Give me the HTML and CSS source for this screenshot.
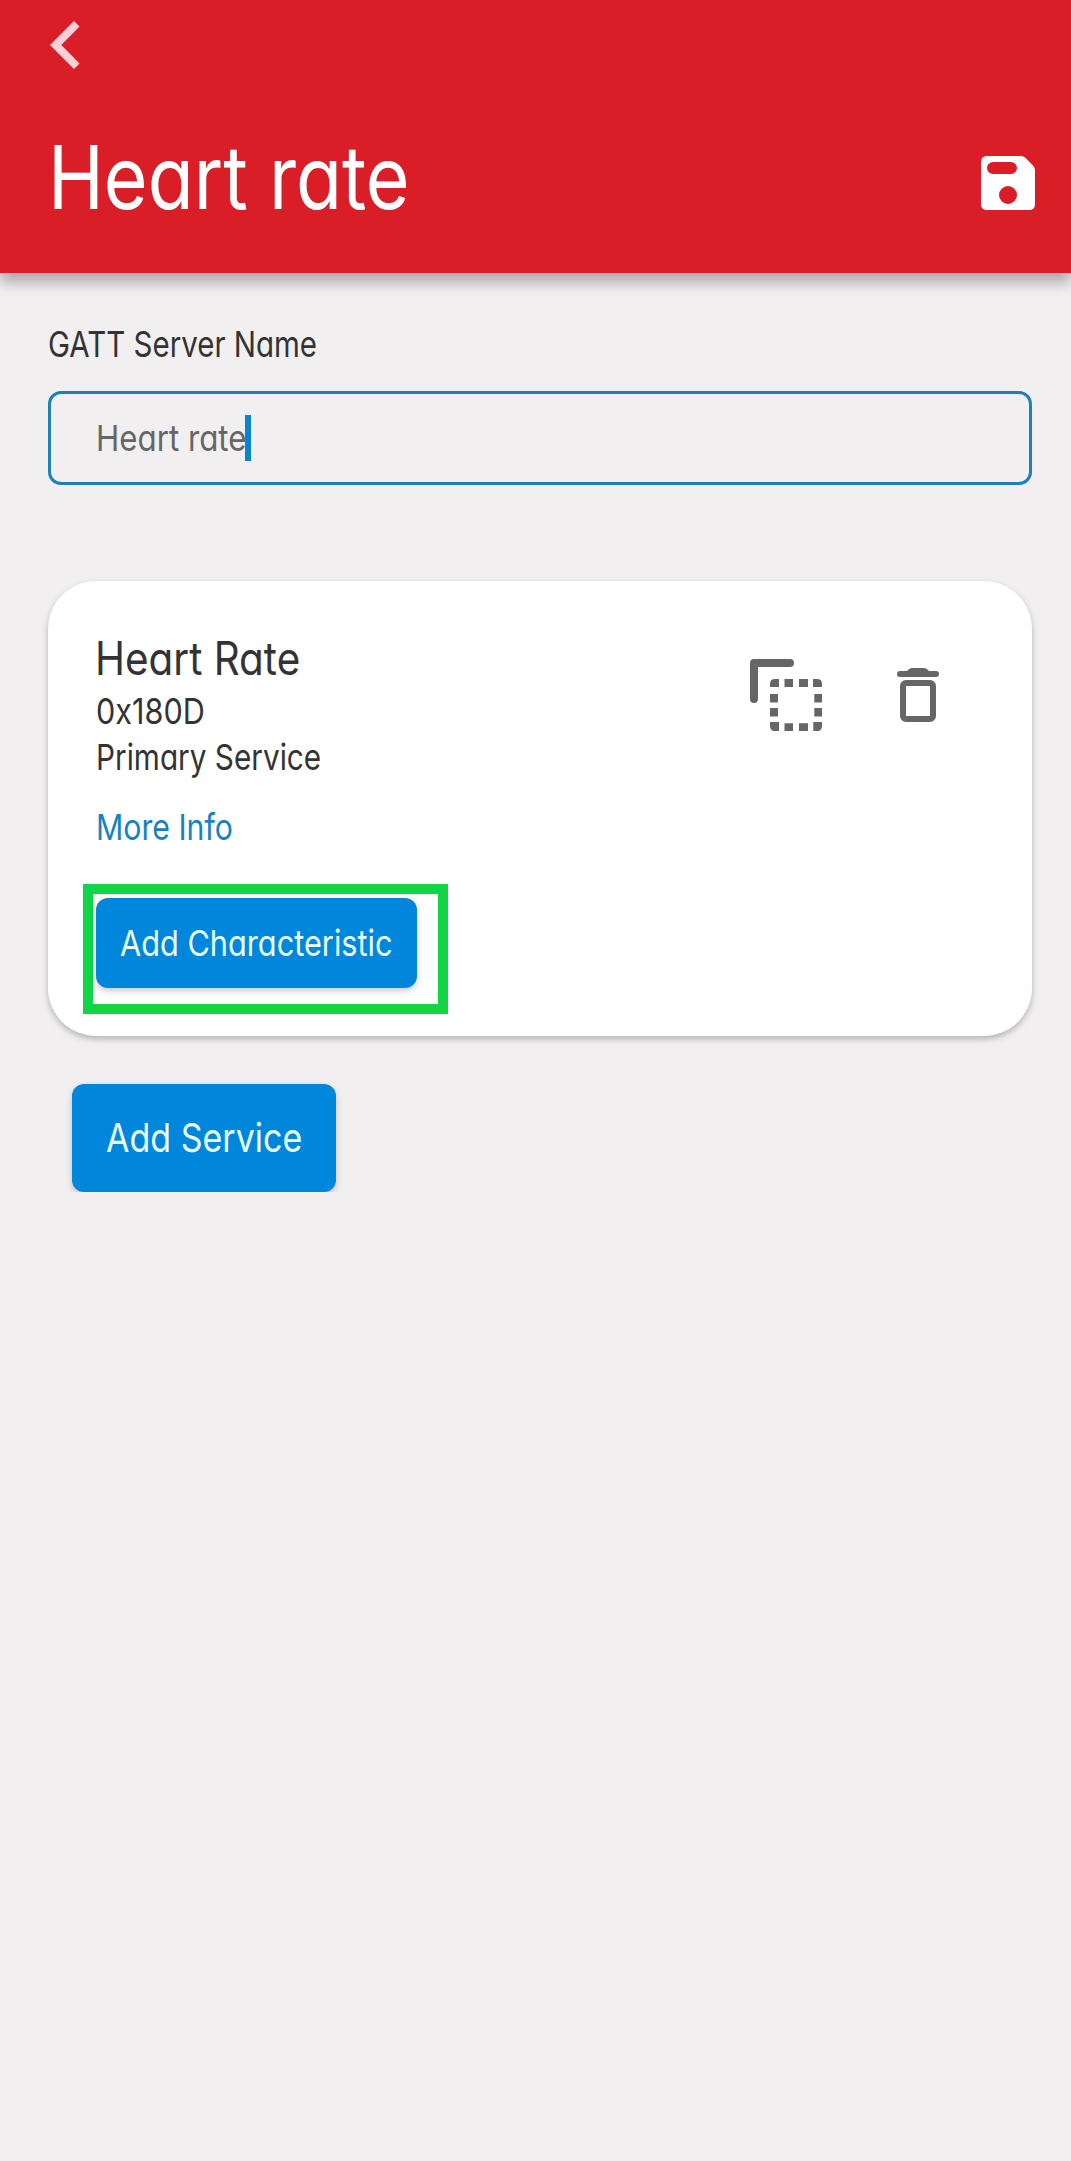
FILE: index.html
```html
<!DOCTYPE html>
<html lang="en">
<head>
<meta charset="utf-8">
<title>Heart rate</title>
<link rel="stylesheet" href="styles.css">
</head>
<body>
<header class="app-bar">
  <svg class="back" width="30" height="48" viewBox="0 0 30 48"><path d="M0 24 24 0l5.500 5.500L11.300 24l18.200 18.500L24 48z"/></svg>
  <div class="title-row">
    <h1 class="title"><span class="text t-title">Heart rate</span></h1>
    <svg class="save" width="54" height="54" viewBox="0 0 54 54"><path fill-rule="evenodd" d="M6 0h34q2.500 0 4.300 1.800l7.900 7.900q1.800 1.800 1.800 4.300v34q0 6-6 6H6q-6 0-6-6V6Q0 0 6 0zM12 6a6 6 0 0 0 0 12h18a6 6 0 0 0 0-12zM27 30a9 9 0 1 0 0 18a9 9 0 1 0 0-18z"/></svg>
  </div>
</header>
<main class="content">
  <div class="label"><span class="text t-label">GATT Server Name</span></div>
  <div class="field"><span class="text t-field">Heart rate</span><i class="caret"></i></div>
  <section class="card">
    <div class="card-head">
      <div class="info">
        <h2 class="name"><span class="text t-name">Heart Rate</span></h2>
        <p class="line"><span class="text t-uuid">0x180D</span></p>
        <p class="line"><span class="text t-kind">Primary Service</span></p>
        <a class="more"><span class="text t-more">More Info</span></a>
      </div>
      <div class="actions">
        <svg width="72" height="72" viewBox="0 0 72 72">
          <path d="M4 40V4h36" fill="none" stroke="#666" stroke-width="8" stroke-linecap="round" stroke-linejoin="round"/>
          <path fill="#666" d="M29 20v8h-9v-3q0-5 5-5zM34.500 20h8.500v8h-8.500zM49 20h9v8h-9zM63 20h4q5 0 5 5v3h-9zM20 35h8v8.500h-8zM64.300 35H72v8.500h-7.700zM20 49h8v8.500h-8zM64.300 49H72v8.500h-7.700zM20 63h9v9h-4q-5 0-5-5zM34.500 64.300h8.500V72h-8.500zM49 64.300h9V72h-9zM63.300 63H72v4q0 5-5 5h-3.700z"/>
        </svg>
        <svg class="trash" width="42" height="54" viewBox="0 0 42 54">
          <path fill="#666" d="M3 3h7l1.500-1.500Q13 0 15 0h12q2 0 3.500 1.500L32 3h7a3 3 0 0 1 0 6H3a3 3 0 0 1 0-6z"/>
          <rect x="6" y="15" width="30" height="36" rx="3" fill="none" stroke="#666" stroke-width="6"/>
        </svg>
      </div>
    </div>
    <div class="highlight"><button class="btn btn-char"><span class="text t-char">Add Characteristic</span></button></div>
  </section>
  <button class="btn btn-service"><span class="text t-service">Add Service</span></button>
</main>
</body>
</html>
```
FILE: styles.css
```css
* { box-sizing: border-box; margin: 0; padding: 0; }
body {
  background: #f1eff0;
  color: #333;
  font: 400 36px/46px Inter, "Liberation Sans", sans-serif;
  font-feature-settings: "cv11" 1;
}
svg { display: block; }
.app-bar {
  position: relative;
  height: 273px;
  padding: 21px 36px 0 50px;
  background: #da1e28;
  color: #fff;
  box-shadow: 0 9px 14px rgba(0, 0, 0, .3);
}
.back { fill: #fbd0d6; }
.title-row { display: flex; justify-content: space-between; margin-top: 57px; }
.title { margin: 1px 0 0 -2px; font-size: 87.500px; line-height: 100px; font-weight: 400; }
.save { fill: #fff; margin-top: 30px; }
.text { display: inline-block; transform-origin: 0 50%; white-space: nowrap; }
.t-title { transform: scaleX(.859); }
.t-label { transform: scaleX(.819); }
.t-field { transform: scaleX(.869); }
.t-name { transform: scaleX(.878); }
.t-uuid { transform: scaleX(.85); }
.t-kind { transform: scaleX(.826); }
.t-more { transform: scaleX(.84); }
.t-char { transform: scaleX(.853); }
.t-service { transform: scaleX(.85); }
.content { padding: 48px 39px 0 48px; }
.label { height: 46px; }
.field {
  display: flex;
  align-items: center;
  height: 94px;
  margin-top: 24px;
  padding-left: 45px;
  border: 3px solid #1c81bb;
  border-radius: 13px;
}
.t-field { color: #666; width: 149px; }
.caret { width: 6px; height: 46px; background: #0784cf; }
.card {
  height: 455px;
  margin-top: 96px;
  padding: 47px 48px 0;
  background: #fff;
  border-radius: 48px;
  box-shadow: 0 3px 6px rgba(0, 0, 0, .25);
}
.card-head { display: flex; justify-content: space-between; height: 256px; }
.name { margin-left: -1px; font-size: 46px; line-height: 60px; font-weight: 400; }
.line { height: 46px; }
.more { display: block; margin-top: 24px; color: #1583c2; }
.actions { display: flex; gap: 75px; padding: 31px 45px 0 0; }
.trash { margin-top: 9px; }
.highlight {
  width: 365px;
  height: 130px;
  margin-left: -13px;
  padding: 4px 3px;
  border: 10px solid #11d447;
}
.btn {
  display: flex;
  align-items: center;
  border: 0;
  border-radius: 12px;
  background: #0086da;
  color: #e8ffff;
  font: inherit;
  font-feature-settings: inherit;
  box-shadow: 0 3px 6px rgba(0, 0, 0, .2);
}
.btn-char { width: 321px; height: 90px; padding-left: 24px; }
.btn-service { width: 264px; height: 108px; margin: 48px 0 0 24px; padding-left: 34px; font-size: 40px; }
```
